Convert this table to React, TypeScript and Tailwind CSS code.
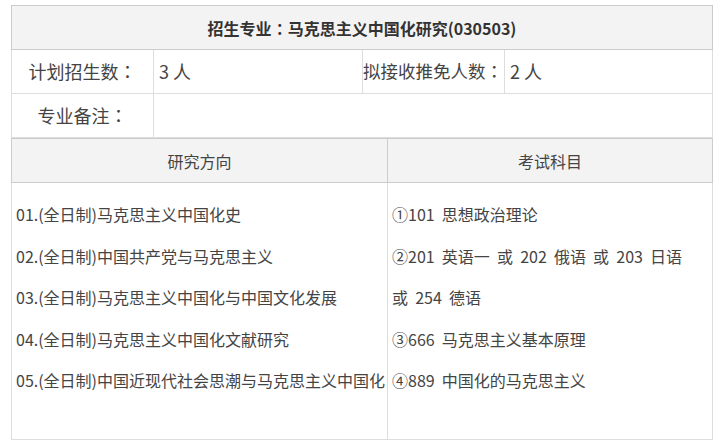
import React from "react";

const font = { fontFamily: '"Noto Sans CJK SC", "Noto Sans", sans-serif' };

function Colon() {
  return <span className="font-['Noto_Sans_CJK_JP',sans-serif]">：</span>;
}

export default function App() {
  const left = [
    "01.(全日制)马克思主义中国化史",
    "02.(全日制)中国共产党与马克思主义",
    "03.(全日制)马克思主义中国化与中国文化发展",
    "04.(全日制)马克思主义中国化文献研究",
    "05.(全日制)中国近现代社会思潮与马克思主义中国化",
  ];
  const right = [
    "①101  思想政治理论",
    "②201  英语一  或  202  俄语  或  203  日语",
    "或  254  德语",
    "③666  马克思主义基本原理",
    "④889  中国化的马克思主义",
  ];
  return (
    <div className="w-[718px] h-[442px] bg-white pt-[5px] pl-[11px] text-[#333]" style={font}>
      <div className="w-[702px]">
        {/* top table */}
        <div className="h-[45px] bg-[#f3f3f3] border border-[#ccc] flex items-center justify-center text-[16px] font-bold text-[#333]">
          招生专业<Colon />马克思主义中国化研究(030503)
        </div>
        <div className="grid grid-cols-[142px_209px_142px_1fr] h-[44px] border-x border-b border-[#ddd] text-[18px] text-[#444]">
          <div className="border-r border-[#ddd] flex items-center justify-center">计划招生数<Colon /></div>
          <div className="border-r border-[#ddd] flex items-center pl-[5px]">3 人</div>
          <div className="border-r border-[#ddd] flex items-center whitespace-nowrap text-[17.5px]">拟接收推免人数<Colon /></div>
          <div className="flex items-center pl-[5px]">2 人</div>
        </div>
        <div className="grid grid-cols-[142px_1fr] h-[44px] border-x border-b border-[#ddd] text-[18px] text-[#444]">
          <div className="border-r border-[#ddd] flex items-center justify-center">专业备注<Colon /></div>
          <div />
        </div>
        {/* second table */}
        <div className="grid grid-cols-[376px_1fr] h-[45px] bg-[#f3f3f3] border border-[#ccc] text-[16px] text-[#444]">
          <div className="border-r border-[#ccc] flex items-center justify-center">研究方向</div>
          <div className="flex items-center justify-center">考试科目</div>
        </div>
        <div className="grid grid-cols-[376px_1fr] h-[257px] border-x border-b border-[#ddd] text-[16px] text-[#444]">
          <div className="border-r border-[#ddd] pt-[11px] pl-[4px]">
            {left.map((t) => (
              <div key={t} className="h-[41.5px] leading-[41.5px] whitespace-nowrap">{t}</div>
            ))}
          </div>
          <div className="pt-[11px] pl-[4px]">
            {right.map((t) => (
              <div key={t} className="h-[41.5px] leading-[41.5px] whitespace-pre">{t}</div>
            ))}
          </div>
        </div>
      </div>
    </div>
  );
}
